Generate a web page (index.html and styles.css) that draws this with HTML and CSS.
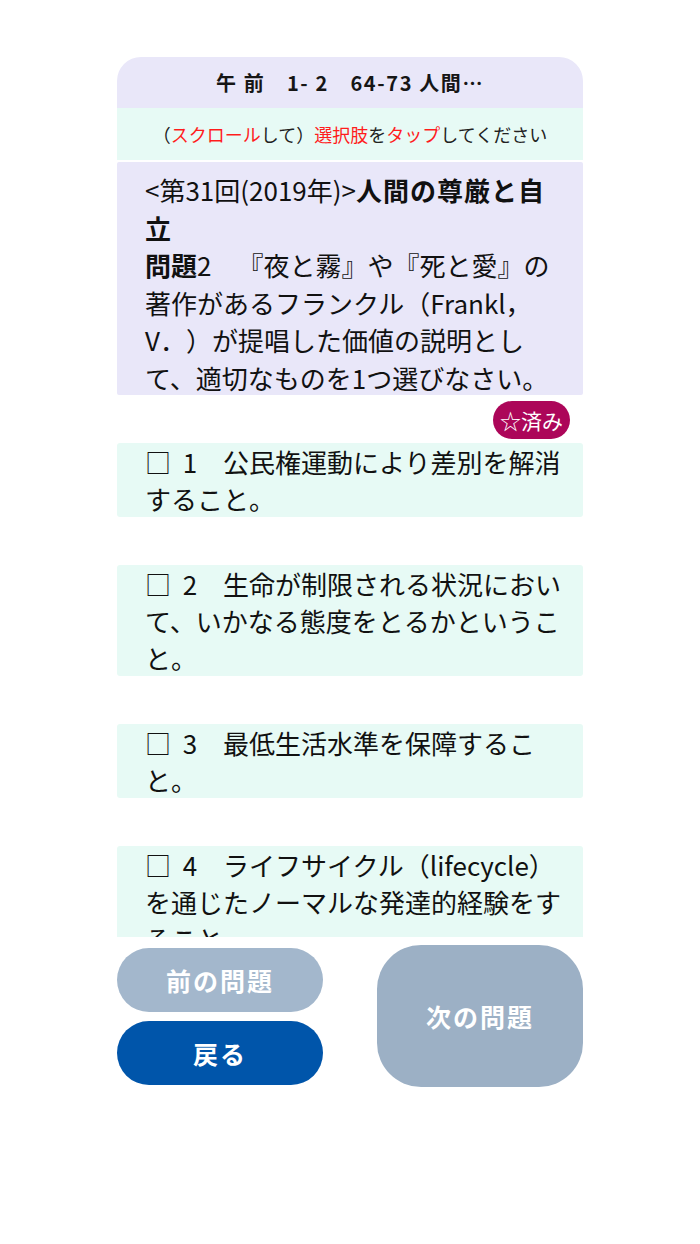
FILE: index.html
```html
<!DOCTYPE html>
<html lang="ja">
<head>
<meta charset="utf-8">
<title>問題</title>
<link rel="stylesheet" href="styles.css">
</head>
<body>
<div class="app">
  <div class="header">午 前　1- 2　64-73 人間…</div>
  <div class="hint">（<span class="red">スクロール</span>して）<span class="red">選択肢</span>を<span class="red">タップ</span>してください</div>
  <div class="scroll">
    <div class="question">&lt;第31回(2019年)&gt;<b class="title">人間の尊厳と自立</b><br><b>問題</b>2　『夜と霧』や『死と愛』の著作があるフランクル（Frankl，V．）が提唱した価値の説明として、適切なものを1つ選びなさい。</div>
    <div class="badge-row"><span class="badge">☆済み</span></div>
    <div class="opt">□&nbsp; 1　公民権運動により差別を解消すること。</div>
    <div class="opt">□&nbsp; 2　生命が制限される状況において、いかなる態度をとるかということ。</div>
    <div class="opt">□&nbsp; 3　最低生活水準を保障すること。</div>
    <div class="opt">□&nbsp; 4　ライフサイクル（lifecycle）を通じたノーマルな発達的経験をすること。</div>
  </div>
  <div class="buttons">
    <div class="left-col">
      <div class="btn btn-prev">前の問題</div>
      <div class="btn btn-back">戻る</div>
    </div>
    <div class="btn btn-next">次の問題</div>
  </div>
</div>
</body>
</html>
```
FILE: styles.css
```css
html, body {
  margin: 0;
  padding: 0;
  background: #ffffff;
}
body {
  font-family: "Noto Sans CJK JP", "Noto Sans", sans-serif;
  color: #111111;
  text-spacing-trim: space-all;
}
.app {
  width: 466px;
  margin: 57px auto 0;
}
.header {
  height: 51px;
  background: #e9e7f9;
  border-radius: 24px 24px 0 0;
  display: flex;
  align-items: center;
  justify-content: center;
  font-size: 20px;
  font-weight: 700;
  letter-spacing: 1.6px;
  color: #161616;
}
.hint {
  height: 52px;
  background: #e7faf5;
  display: flex;
  align-items: center;
  justify-content: center;
  font-size: 18px;
  color: #222222;
}
.red {
  color: #ff1c1c;
}
.scroll {
  height: 777px;
  overflow: hidden;
}
.question {
  margin-top: 2px;
  background: #e9e7f9;
  padding: 9px 22px 0 28px;
  height: 233px;
  box-sizing: border-box;
  font-size: 26px;
  line-height: 37.5px;
  border-radius: 2px;
}
.question .title {
  letter-spacing: 1px;
}
.badge-row {
  display: flex;
  justify-content: flex-end;
  padding-right: 13px;
  margin-top: 6px;
}
.badge {
  display: inline-block;
  height: 38px;
  line-height: 38px;
  padding: 0 7px;
  border-radius: 19px;
  background: #ac0659;
  color: #ffffff;
  font-size: 21px;
}
.opt {
  margin-top: 4px;
  margin-bottom: 48px;
  background: #e7faf5;
  border-radius: 3px;
  padding: 0 15px 0 28px;
  font-size: 26px;
  line-height: 37px;
}
.buttons {
  display: flex;
  justify-content: space-between;
  align-items: center;
  height: 142px;
  margin-top: 8px;
}
.left-col {
  display: flex;
  flex-direction: column;
  gap: 9px;
  width: 206px;
}
.btn {
  display: flex;
  align-items: center;
  justify-content: center;
  color: #ffffff;
  font-size: 25px;
  font-weight: 700;
  letter-spacing: 2px;
}
.btn-prev {
  height: 64px;
  border-radius: 32px;
  background: #a3b7cc;
}
.btn-back {
  height: 64px;
  border-radius: 32px;
  background: #0055aa;
}
.btn-next {
  width: 206px;
  height: 142px;
  border-radius: 44px;
  background: #9cb0c5;
}
```
